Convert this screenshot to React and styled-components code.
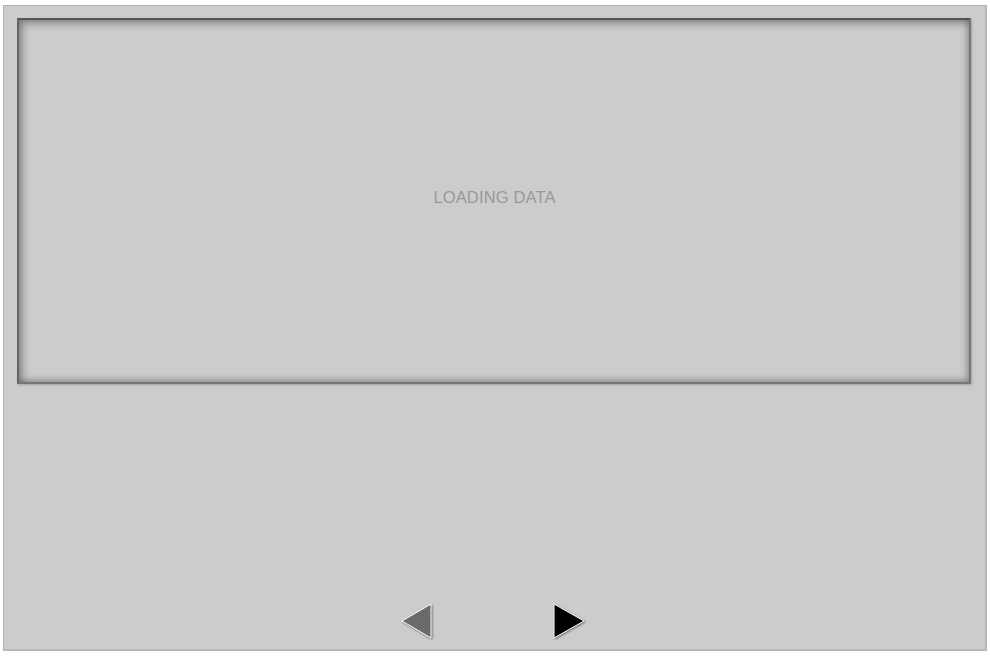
import React from 'react';
import styled, { createGlobalStyle } from 'styled-components';

const Global = createGlobalStyle`
  html, body {
    margin: 0;
    background: #ffffff;
    font-family: "Liberation Sans", Arial, sans-serif;
  }
`;

const Page = styled.div`
  padding: 5px 3px 0 3px;
`;

const Frame = styled.div`
  box-sizing: border-box;
  width: 984px;
  height: 646px;
  background: #cccccc;
  border: 1px solid #b0b0b0;
  border-right: 2px solid #b8b8b8;
  border-bottom: 2px solid #b8b8b8;
  padding: 12px 14px 0 13px;
  display: flex;
  flex-direction: column;
`;

const Panel = styled.div`
  box-sizing: border-box;
  height: 366px;
  border: 2px solid #777777;
  border-top-color: #555555;
  border-left-color: #666666;
  background: #cccccc;
  box-shadow: inset 3px 3px 9px rgba(0, 0, 0, 0.35), inset -2px -2px 7px rgba(0, 0, 0, 0.25),
    1px 1px 2px rgba(0, 0, 0, 0.2);
  display: flex;
  align-items: center;
  justify-content: center;
  padding-bottom: 8px;
`;

const Loading = styled.span`
  font-size: 16.5px;
  color: #999999;
  letter-spacing: 0.15px;
  margin-left: 1px;
`;

const Nav = styled.div`
  margin-top: auto;
  display: flex;
  justify-content: center;
  gap: 116px;
  padding-bottom: 7px;
  padding-right: 0;
`;

const Arrow = styled.button`
  border: 0;
  padding: 0;
  background: transparent;
  width: 36px;
  height: 40px;
  cursor: pointer;
  svg {
    display: block;
    filter: drop-shadow(1px 1px 1px rgba(0, 0, 0, 0.45));
  }
`;

const Triangle = ({ dir, fill }) => (
  <svg width="36" height="40" viewBox="0 0 36 40">
    {dir === 'left' ? (
      <polygon points="31,2 31,36 2,19" fill={fill} stroke="#ffffff" strokeWidth="1" strokeLinejoin="miter" />
    ) : (
      <polygon points="2,2 2,36 32,19" fill={fill} stroke="#ffffff" strokeWidth="1" strokeLinejoin="miter" />
    )}
  </svg>
);

export default function App() {
  return (
    <Page>
      <Global />
      <Frame>
        <Panel>
          <Loading>LOADING DATA</Loading>
        </Panel>
        <Nav>
          <Arrow aria-label="previous">
            <Triangle dir="left" fill="#6a6a6a" />
          </Arrow>
          <Arrow aria-label="next">
            <Triangle dir="right" fill="#000000" />
          </Arrow>
        </Nav>
      </Frame>
    </Page>
  );
}
